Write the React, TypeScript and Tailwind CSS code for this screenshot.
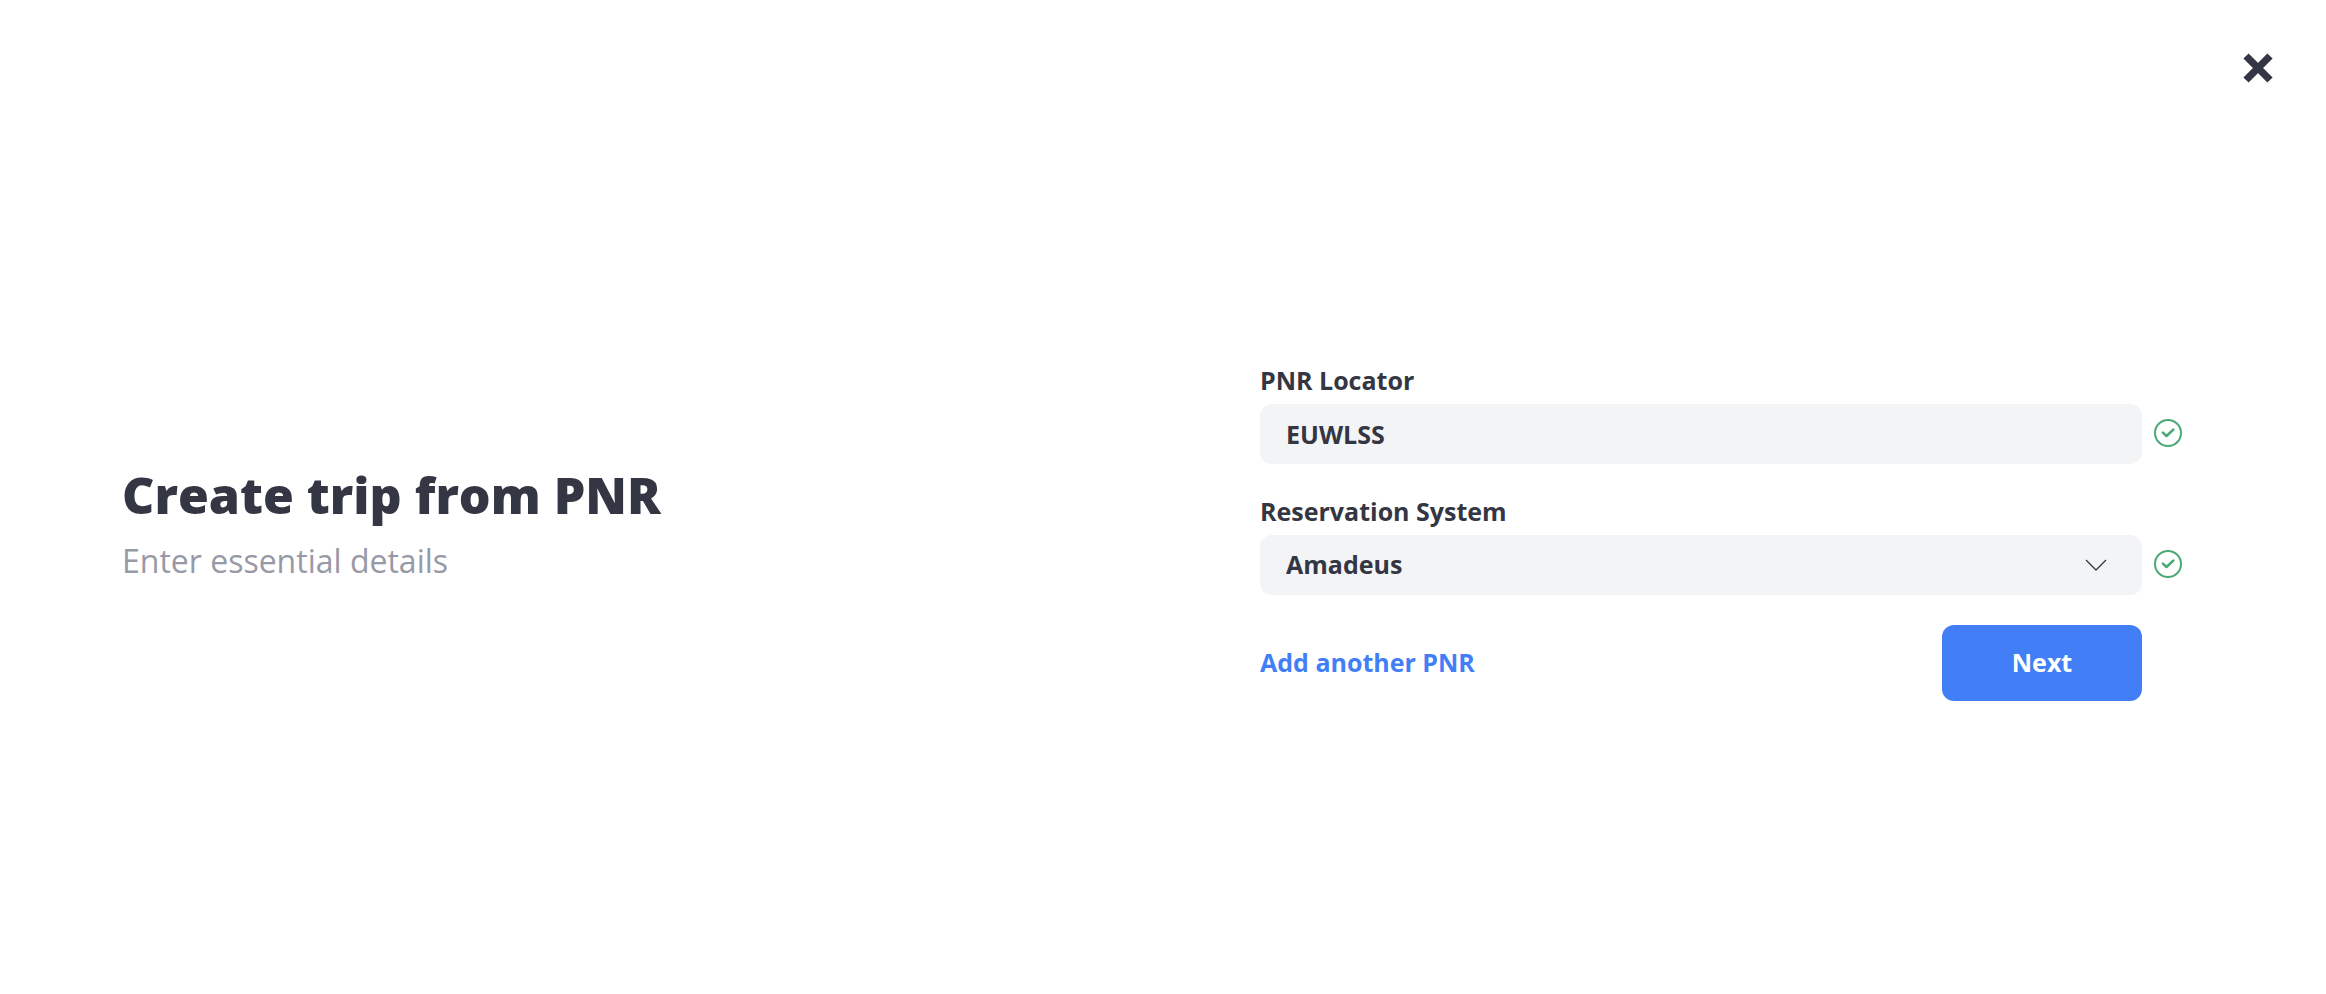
import { useState } from "react";
import type { ReactNode } from "react";

function CloseIcon() {
  return (
    <svg width="30" height="30" viewBox="0 0 30 30" fill="none" stroke="currentColor" strokeWidth="7.4" aria-hidden="true">
      <path d="M3 3 27 27M27 3 3 27" />
    </svg>
  );
}

function ValidIcon() {
  return (
    <svg width="28" height="28" viewBox="0 0 28 28" fill="none" stroke="currentColor" className="mb-0.5 shrink-0 text-[#4ba877]" aria-hidden="true">
      <circle cx="14" cy="14" r="13" strokeWidth="2" />
      <path d="M8.9 13.6 12.5 17 19.3 10.6" strokeWidth="2.6" strokeLinecap="round" strokeLinejoin="round" />
    </svg>
  );
}

function ChevronIcon() {
  return (
    <svg width="22" height="12" viewBox="0 0 22 12" fill="none" stroke="currentColor" strokeWidth="1.3" className="pointer-events-none col-start-1 row-start-1 mr-[35px] self-center justify-self-end" aria-hidden="true">
      <path d="M1 1 11 11 21 1" />
    </svg>
  );
}

function Field({ id, label, children }: { id: string; label: string; children: ReactNode }) {
  return (
    <div className="flex flex-col gap-2">
      <label htmlFor={id} className="text-[25px] leading-8">{label}</label>
      <div className="flex items-center gap-3">
        <div className="grid min-w-0 flex-1">{children}</div>
        <ValidIcon />
      </div>
    </div>
  );
}

export default function App() {
  const [locator, setLocator] = useState("EUWLSS");
  const [system, setSystem] = useState("Amadeus");

  return (
    <div className="flex min-h-screen flex-col bg-white font-['Open_Sans',sans-serif] text-[#343643]">
      <header className="flex justify-end pt-[53px] pr-[53px]">
        <button type="button" aria-label="Close"><CloseIcon /></button>
      </header>
      <main className="grid flex-1 grid-cols-2 items-center pb-3">
        <section className="pb-5 pl-[122px]">
          <h1 className="text-[50px] leading-[64px] font-extrabold">Create trip from PNR</h1>
          <p className="mt-3 text-[32px] leading-[44px] text-[#9799a6]">Enter essential details</p>
        </section>
        <form className="flex flex-col pr-36 pl-[97px] font-bold" onSubmit={(e) => e.preventDefault()}>
          <div className="flex flex-col gap-[31px]">
            <Field id="locator" label="PNR Locator">
              <input id="locator" value={locator} onChange={(e) => setLocator(e.target.value)} className="h-[60px] w-full rounded-xl bg-[#f3f4f6] px-[26px] text-[25px] outline-none" />
            </Field>
            <Field id="system" label="Reservation System">
              <select id="system" value={system} onChange={(e) => setSystem(e.target.value)} className="col-start-1 row-start-1 h-[60px] w-full appearance-none rounded-xl bg-[#f3f4f6] px-[26px] text-[25px] outline-none">
                <option>Amadeus</option>
              </select>
              <ChevronIcon />
            </Field>
          </div>
          <div className="mt-[30px] mr-10 flex items-center justify-between text-[25px]">
            <button type="button" className="text-[#427ff6]">Add another PNR</button>
            <button type="submit" className="h-[76px] w-[200px] rounded-xl bg-[#427ff6] text-white">Next</button>
          </div>
        </form>
      </main>
    </div>
  );
}
